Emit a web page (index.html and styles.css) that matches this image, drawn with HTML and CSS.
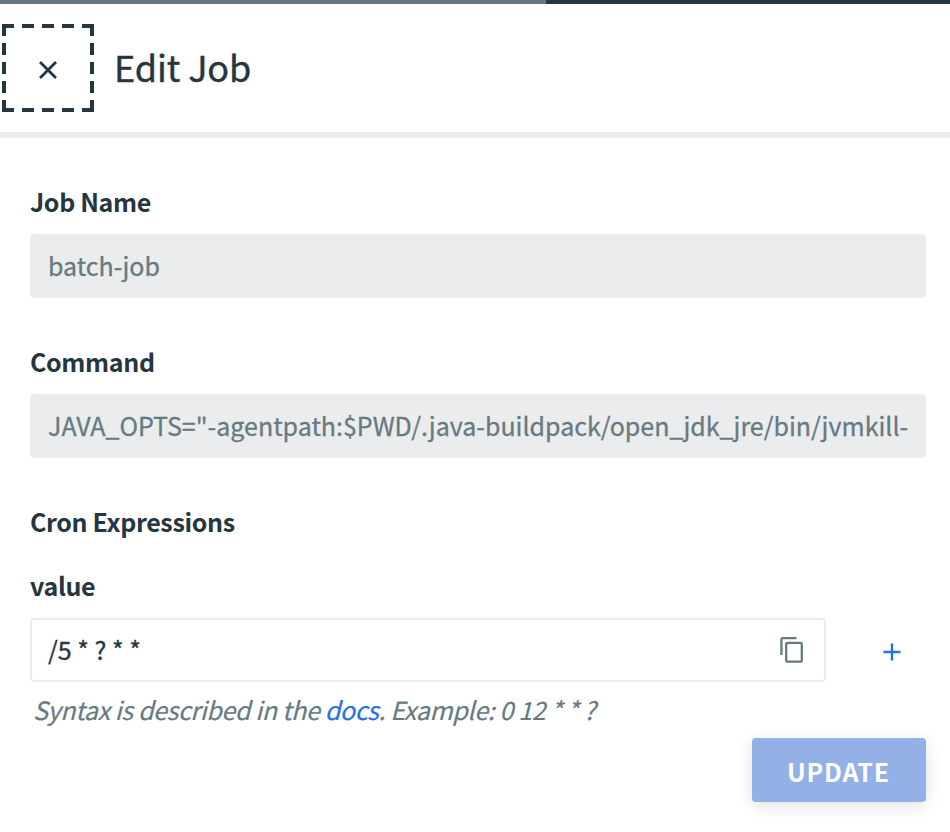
FILE: index.html
```html
<!DOCTYPE html>
<html lang="en">
<head>
<meta charset="utf-8">
<title>Edit Job</title>
<link rel="stylesheet" href="styles.css">
</head>
<body>
<div class="progress"><div class="progress-done"></div></div>
<header class="header">
  <button class="close" aria-label="Close">
    <svg width="92" height="88" viewBox="0 0 92 88" fill="none" stroke="#263640">
      <path stroke-width="4" stroke-dasharray="12 8" d="M0 2H92M0 86H92"/>
      <path stroke-width="4" stroke-dasharray="12 7" d="M2 0V88M90 0V88"/>
      <path stroke-width="2.8" d="M38 38L54 54M54 38L38 54"/>
    </svg>
  </button>
  <h1 class="title">Edit Job</h1>
</header>
<main class="form">
  <section class="field">
    <div class="label">Job Name</div>
    <div class="input disabled">batch-job</div>
  </section>
  <section class="field">
    <div class="label">Command</div>
    <div class="input disabled">JAVA_OPTS="-agentpath:$PWD/.java-buildpack/open_jdk_jre/bin/jvmkill-</div>
  </section>
  <section class="cron">
    <div class="label section-label">Cron Expressions</div>
    <div class="label">value</div>
    <div class="row">
      <div class="input editable">
        <span>/5 * ? * *</span>
        <svg width="24" height="28" viewBox="0 0 24 28" fill="none" stroke="#677a82" stroke-width="2.3">
          <path d="M1.4 19V3.4Q1.4 2.2 2.6 2.2H16.5"/>
          <rect x="6.2" y="6.9" width="15.6" height="18.8" rx="1.5"/>
        </svg>
      </div>
      <button class="add" aria-label="Add">
        <svg width="18" height="18" viewBox="0 0 18 18" fill="none" stroke="#2470e4" stroke-width="2.4"><path d="M9 0.5V17.5M0.5 9H17.5"/></svg>
      </button>
    </div>
    <p class="hint">Syntax is described in the <a class="link">docs</a>. Example: 0 12 * * ?</p>
  </section>
  <div class="actions"><button class="update">UPDATE</button></div>
</main>
</body>
</html>
```
FILE: styles.css
```css
* { box-sizing: border-box; }
body {
  margin: 0;
  background: #fff;
  color: #263640;
  font-family: "Noto Sans CJK SC", "Noto Sans", sans-serif;
  font-size: 25px;
  line-height: 36px;
}
button { padding: 0; border: 0; background: none; font: inherit; color: inherit; }
.progress { height: 4px; background: #263640; }
.progress-done { width: 546px; height: 4px; background: #677a82; }
.header {
  display: flex;
  height: 134px;
  padding: 20px 0 0 2px;
  border-bottom: 6px solid #ebeced;
}
.close { width: 92px; height: 88px; }
.close svg { display: block; }
.title {
  margin: 0 0 0 20px;
  font-size: 36px;
  font-weight: 400;
  line-height: 84px;
  letter-spacing: -0.1px;
  -webkit-text-stroke: 0.4px currentColor;
}
.form { padding: 46px 24px 30px 30px; }
.field { height: 160px; }
.label { height: 50px; font-weight: 700; letter-spacing: -0.35px; line-height: 34px; }
.section-label { height: 64px; }
.input {
  height: 64px;
  padding: 0 18px;
  border-radius: 4px;
  line-height: 62px;
  white-space: nowrap;
  overflow: hidden;
  -webkit-text-stroke: 0.3px currentColor;
}
.disabled { background: #ebeced; color: #677a82; }
.row { display: flex; align-items: center; }
.editable {
  display: flex;
  align-items: center;
  justify-content: space-between;
  width: 796px;
  padding: 0 20px 0 16px;
  border: 2px solid #ebeced;
}
.editable span { line-height: 36px; margin-top: -2px; }
.add { width: 18px; height: 18px; margin: 4px 0 0 57px; }
.add svg { display: block; }
.hint {
  margin: 9px 0 0 3px;
  color: #677a82;
  font-style: italic;
  letter-spacing: -0.34px;
  -webkit-text-stroke: 0.2px currentColor;
}
.link { color: #2470e4; }
.actions { display: flex; justify-content: flex-end; margin-top: 11px; }
.update {
  width: 174px;
  height: 64px;
  padding: 1px 1px 0 0;
  border-radius: 4px;
  background: #93b1e7;
  color: #fff;
  font-weight: 700;
  letter-spacing: 0.8px;
  box-shadow: 0 4px 16px rgba(0, 0, 0, 0.12);
}
```
